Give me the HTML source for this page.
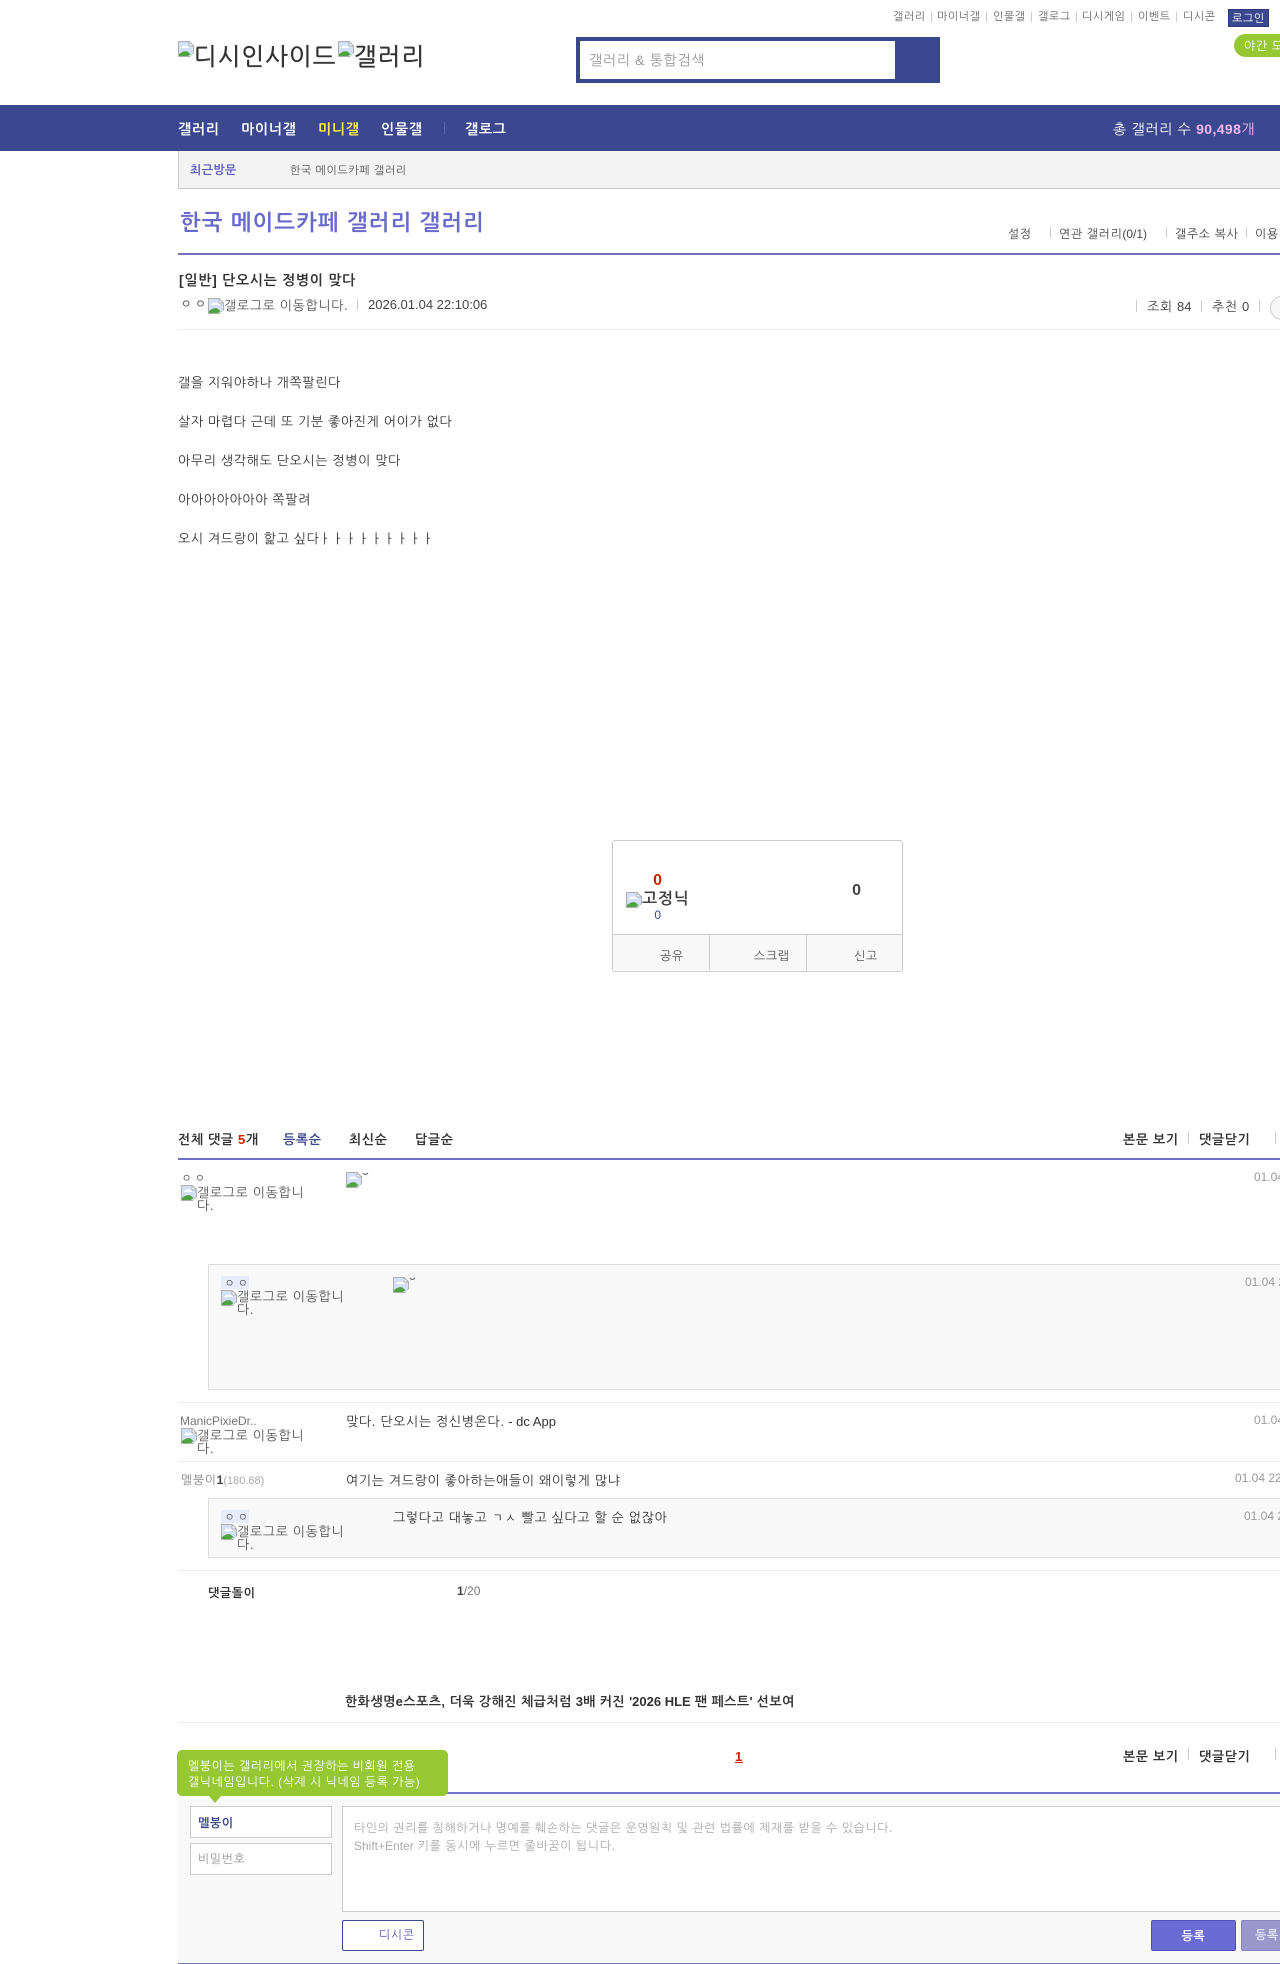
<!DOCTYPE html>
<html lang="ko"><head><meta charset="utf-8"><title>단오시는 정병이 맞다</title>
<style>
html,body{margin:0;padding:0;background:#fff}
body{position:relative;width:1280px;height:1964px;overflow:hidden;font-family:"Liberation Sans","NanumGothic",sans-serif;font-size:13px;color:#333}
.t{position:absolute;white-space:nowrap;line-height:16px;height:16px}
.t,.w,.r{letter-spacing:.05em}
.b{font-weight:bold}
.r{position:absolute}
.s{position:absolute;width:1px;background:#ccc}
.i{position:absolute;width:16px;height:16px}
.l{position:absolute;left:178px;right:0;height:1px;background:#eee}
.w{position:absolute;white-space:nowrap;font-size:13px;line-height:13px;color:#555}
.n{letter-spacing:0}
.j{letter-spacing:2px}
</style></head><body>
<svg width="0" height="0" style="position:absolute"><defs><symbol id="x" viewBox="0 0 16 16"><path d="M.5.5H11L15.500 5V12L12 15.500H.5Z" fill="#d3e0f8" stroke="#b0b0b0"/><path d="M11 .5V5H15.500Z" fill="#fff" stroke="#b0b0b0"/><path d="M3 7Q5 3.500 7 5Q10 3.500 12 7Z" fill="#fff"/><path d="M1 15V13Q6 9 9.500 10.500L12.500 13L10 15Z" fill="#4ea23f"/><path d="M12 15.500L15.500 12V15.500Z" fill="#fff"/></symbol></defs></svg>

<svg class="i" style="left:178px;top:41px"><use href="#x"/></svg>
<div class="t" style="left:194px;top:43px;font-size:24px;line-height:30px;height:30px;color:#333;-webkit-text-stroke:.5px #333">디시인사이드</div>
<svg class="i" style="left:338px;top:41px"><use href="#x"/></svg>
<div class="t" style="left:354px;top:43px;font-size:24px;line-height:30px;height:30px;color:#333;-webkit-text-stroke:.5px #333">갤러리</div>

<div class="r" style="left:576px;top:37px;width:364px;height:46px;background:#3b4890"></div>
<div class="r" style="left:580px;top:41px;width:315px;height:38px;background:#fff"></div>
<div class="t" style="left:589px;top:52px;font-size:14px;color:#999">갤러리 &amp; 통합검색</div>

<div class="t" style="left:893px;top:9px;font-size:11px;color:#666">갤러리</div><div class="s" style="left:931px;top:12px;height:10px"></div>
<div class="t" style="left:937px;top:9px;font-size:11px;color:#666">마이너갤</div><div class="s" style="left:986px;top:12px;height:10px"></div>
<div class="t" style="left:993px;top:9px;font-size:11px;color:#666">인물갤</div><div class="s" style="left:1031px;top:12px;height:10px"></div>
<div class="t" style="left:1038px;top:9px;font-size:11px;color:#666">갤로그</div><div class="s" style="left:1076px;top:12px;height:10px"></div>
<div class="t" style="left:1082px;top:9px;font-size:11px;color:#666">디시게임</div><div class="s" style="left:1131px;top:12px;height:10px"></div>
<div class="t" style="left:1138px;top:9px;font-size:11px;color:#666">이벤트</div><div class="s" style="left:1176px;top:12px;height:10px"></div>
<div class="t" style="left:1183px;top:9px;font-size:11px;color:#666">디시콘</div>
<div class="r" style="left:1228px;top:9px;width:39px;height:16px;background:#3b4890;border:1px solid #2e3a7c;color:#fff;font-size:11px;line-height:18px;text-align:center">로그인</div>
<div class="r" style="left:1234px;top:34px;width:80px;height:23px;border-radius:12px 0 0 12px;background:#95c832"></div>
<div class="t" style="left:1244px;top:38px;font-size:12px;color:#fff">야간 모드</div>

<div class="r" style="left:0;top:105px;width:1280px;height:46px;background:#3b4890"></div>
<div class="t b" style="left:178px;top:121px;font-size:14px;color:#fff">갤러리</div>
<div class="t b" style="left:241px;top:121px;font-size:14px;color:#fff">마이너갤</div>
<div class="t b" style="left:318px;top:121px;font-size:14px;color:#fff04a">미니갤</div>
<div class="t b" style="left:381px;top:121px;font-size:14px;color:#fff">인물갤</div>
<div class="s" style="left:444px;top:122px;height:12px;background:#5f6aa8"></div>
<div class="t b" style="left:465px;top:121px;font-size:14px;color:#fff">갤로그</div>
<div class="t" style="left:1113px;top:121px;font-size:14px;color:#fff">총 갤러리 수 <b style="color:#f6b6ee;letter-spacing:.4px">90,498</b><span style="color:#f6b6ee">개</span></div>

<div class="r" style="left:178px;top:151px;right:0;height:37px;background:#f3f3f3;border-left:1px solid #ccc;border-bottom:1px solid #ccc"></div>
<div class="t b" style="left:190px;top:162px;font-size:12px;letter-spacing:.4px;color:#5b5bc2">최근방문</div>
<div class="t" style="left:290px;top:163px;font-size:11px;letter-spacing:.6px;color:#555">한국 메이드카페 갤러리</div>

<div class="t" style="left:180px;top:208px;font-size:22px;line-height:30px;height:30px;color:#6a6acb;font-weight:bold">한국 메이드카페 갤러리 갤러리</div>
<div class="t" style="left:1008px;top:226px;font-size:12px;color:#444">설정</div><div class="s" style="left:1050px;top:227px;height:11px"></div>
<div class="t" style="left:1059px;top:226px;font-size:12px;color:#444">연관 갤러리<span class="n">(0/1)</span></div><div class="s" style="left:1166px;top:227px;height:11px"></div>
<div class="t" style="left:1175px;top:226px;font-size:12px;color:#444">갤주소 복사</div><div class="s" style="left:1246px;top:227px;height:11px"></div>
<div class="t" style="left:1255px;top:226px;font-size:12px;color:#444">이용 안내</div>
<div class="r" style="left:178px;top:253px;right:0;height:2px;background:#7571bb"></div>

<div class="t b" style="left:179px;top:272px;font-size:14px;color:#333">[일반] 단오시는 정병이 맞다</div>
<div class="t" style="left:180px;top:296px;font-size:13px;color:#555;letter-spacing:2.2px">ㅇㅇ</div>
<svg class="i" style="left:208px;top:298px"><use href="#x"/></svg>
<div class="t" style="left:224px;top:298px;font-size:13px;color:#555">갤로그로 이동합니다.</div>
<div class="s" style="left:357px;top:299px;height:11px"></div>
<div class="t n" style="left:368px;top:297px;font-size:13px;color:#444">2026.01.04 22:10:06</div>
<div class="s" style="left:1136px;top:300px;height:12px"></div>
<div class="t" style="left:1147px;top:299px;font-size:13px;color:#444">조회 <span class="n">84</span></div>
<div class="s" style="left:1201px;top:300px;height:12px"></div>
<div class="t" style="left:1212px;top:299px;font-size:13px;color:#444">추천 <span class="n">0</span></div>
<div class="s" style="left:1259px;top:300px;height:12px"></div>
<div class="r" style="left:1270px;top:296px;width:22px;height:22px;border-radius:50%;border:1px solid #ccc;background:#f6f6f6"></div>
<div class="l" style="top:329px"></div>

<div class="t" style="left:178px;top:375px;color:#333">갤을 지워야하나 개쪽팔린다</div>
<div class="t" style="left:178px;top:414px;color:#333">살자 마렵다 근데 또 기분 좋아진게 어이가 없다</div>
<div class="t" style="left:178px;top:453px;color:#333">아무리 생각해도 단오시는 정병이 맞다</div>
<div class="t" style="left:178px;top:492px;color:#333">아아아아아아아 쪽팔려</div>
<div class="t" style="left:178px;top:531px;color:#333">오시 겨드랑이 핥고 싶다ㅏㅏㅏㅏㅏㅏㅏㅏㅏ</div>

<div class="r" style="left:612px;top:840px;width:289px;height:130px;border:1px solid #ccc;border-radius:3px;background:#fff"></div>
<div class="r" style="left:613px;top:934px;width:289px;height:36px;background:#f8f8f8;border-top:1px solid #ccc;box-sizing:border-box;border-radius:0 0 3px 3px"></div>
<div class="s" style="left:709px;top:934px;height:36px"></div>
<div class="s" style="left:806px;top:934px;height:36px"></div>
<div class="t b" style="left:648px;top:873px;width:20px;text-align:center;font-size:16px;color:#cc2200">0</div>
<svg class="i" style="left:626px;top:892px"><use href="#x"/></svg>
<div class="t" style="left:642px;top:892px;font-size:16px;color:#444;font-weight:bold">고정닉</div>
<div class="t" style="left:648px;top:907px;width:20px;text-align:center;font-size:12px;color:#3b4890">0</div>
<div class="t b" style="left:847px;top:883px;width:20px;text-align:center;font-size:16px;color:#444">0</div>
<div class="t" style="left:660px;top:948px;font-size:12px;color:#555">공유</div>
<div class="t" style="left:754px;top:948px;font-size:12px;color:#555">스크랩</div>
<div class="t" style="left:854px;top:948px;font-size:12px;color:#555">신고</div>

<div class="t b" style="left:178px;top:1132px">전체 댓글 <span style="color:#cc2200">5</span>개</div>
<div class="t b" style="left:283px;top:1132px;color:#3b4890">등록순</div>
<div class="t b" style="left:349px;top:1132px">최신순</div>
<div class="t b" style="left:415px;top:1132px">답글순</div>
<div class="t b" style="left:1123px;top:1132px">본문 보기</div><div class="s" style="left:1188px;top:1132px;height:12px"></div>
<div class="t b" style="left:1199px;top:1132px">댓글닫기</div><div class="s" style="left:1275px;top:1132px;height:12px"></div>
<div class="r" style="left:178px;top:1158px;right:0;height:2px;background:#7070c6"></div>

<div class="t j" style="left:181px;top:1170px;font-size:12px;color:#666">ㅇㅇ</div>
<svg class="i" style="left:181px;top:1185px"><use href="#x"/></svg>
<div class="w" style="left:197px;top:1186px">갤로그로 이동합니<br>다.</div>
<svg class="i" style="left:346px;top:1172px"><use href="#x"/></svg>
<svg class="r" style="left:362px;top:1172px;width:7px;height:5px"><path d="M1 1Q3 4 6 1" fill="none" stroke="#555"/></svg>
<div class="t n" style="left:1254px;top:1169px;font-size:12px;color:#999">01.04 22:20:35</div>

<div class="r" style="left:208px;top:1264px;right:-10px;height:124px;background:#f9f9f9;border:1px solid #ddd"></div>
<div class="r" style="left:221px;top:1276px;width:28px;height:13px;background:#e6ecfb"></div>
<div class="t j" style="left:224px;top:1275px;font-size:12px;color:#666">ㅇㅇ</div>
<svg class="i" style="left:221px;top:1290px"><use href="#x"/></svg>
<div class="w" style="left:237px;top:1290px">갤로그로 이동합니<br>다.</div>
<svg class="i" style="left:393px;top:1277px"><use href="#x"/></svg>
<svg class="r" style="left:409px;top:1277px;width:7px;height:5px"><path d="M1 1Q3 4 6 1" fill="none" stroke="#555"/></svg>
<div class="t n" style="left:1245px;top:1274px;font-size:12px;color:#999">01.04 22:31:02</div>
<div class="l" style="top:1402px"></div>

<div class="t n" style="left:180px;top:1413px;font-size:12px;color:#777">ManicPixieDr..</div>
<svg class="i" style="left:181px;top:1428px"><use href="#x"/></svg>
<div class="w" style="left:197px;top:1429px">갤로그로 이동합니<br>다.</div>
<div class="t" style="left:346px;top:1414px;color:#333">맞다. 단오시는 정신병온다.<span class="n"> - dc App</span></div>
<div class="t n" style="left:1254px;top:1412px;font-size:12px;color:#999">01.04 22:35:14</div>
<div class="l" style="top:1461px"></div>

<div class="t" style="left:181px;top:1472px;font-size:12px;color:#888">멜붕이<b class="n" style="color:#444">1</b><span class="n" style="color:#aaa;font-size:11px">(180.68)</span></div>
<div class="t" style="left:346px;top:1473px;color:#333">여기는 겨드랑이 좋아하는애들이 왜이렇게 많냐</div>
<div class="t n" style="left:1235px;top:1470px;font-size:12px;color:#999">01.04 22:40:51</div>
<div class="r" style="left:208px;top:1498px;right:-10px;height:58px;background:#f9f9f9;border:1px solid #ddd"></div>
<div class="r" style="left:221px;top:1510px;width:28px;height:13px;background:#e6ecfb"></div>
<div class="t j" style="left:224px;top:1509px;font-size:12px;color:#666">ㅇㅇ</div>
<svg class="i" style="left:221px;top:1524px"><use href="#x"/></svg>
<div class="w" style="left:237px;top:1525px">갤로그로 이동합니<br>다.</div>
<div class="t" style="left:393px;top:1510px;color:#333">그렇다고 대놓고 ㄱㅅ 빨고 싶다고 할 순 없잖아</div>
<div class="t n" style="left:1244px;top:1508px;font-size:12px;color:#999">01.04 22:42:09</div>
<div class="l" style="top:1570px"></div>

<div class="t b" style="left:208px;top:1585px;font-size:12px;color:#333">댓글돌이</div>
<div class="t n" style="left:457px;top:1583px;font-size:12px;color:#777"><b style="color:#444">1</b>/20</div>

<div class="t b" style="left:345px;top:1694px;color:#333;letter-spacing:.45px">한화생명e스포츠, 더욱 강해진 체급처럼 <span class="n">3</span>배 커진 <span class="n">'2026 HLE</span> 팬 페스트<span class="n">'</span> 선보여</div>
<div class="l" style="top:1722px"></div>
<div class="t b" style="left:735px;top:1749px;color:#cc2200;text-decoration:underline">1</div>
<div class="t b" style="left:1123px;top:1749px">본문 보기</div><div class="s" style="left:1188px;top:1748px;height:12px"></div>
<div class="t b" style="left:1199px;top:1749px">댓글닫기</div><div class="s" style="left:1275px;top:1748px;height:12px"></div>

<div class="r" style="left:178px;top:1794px;right:0;height:169px;background:#f9f9f9"></div>
<div class="r" style="left:178px;top:1792px;right:0;height:2px;background:#7070c6"></div>
<div class="r" style="left:178px;top:1963px;right:0;height:1px;background:#7571bb"></div>
<div class="r" style="left:177px;top:1750px;width:271px;height:46px;border-radius:5px;background:#95c832"></div>
<div class="r" style="left:209px;top:1796px;width:0;height:0;border-left:6px solid transparent;border-right:6px solid transparent;border-top:7px solid #95c832"></div>
<div class="t" style="left:188px;top:1758px;font-size:12px;color:#fff;letter-spacing:.5px">멜붕이는 갤러리에서 권장하는 비회원 전용</div>
<div class="t" style="left:188px;top:1774px;font-size:12px;color:#fff;letter-spacing:.5px">갤닉네임입니다. (삭제 시 닉네임 등록 가능)</div>

<div class="r" style="left:190px;top:1806px;width:140px;height:30px;background:#fff;border:1px solid #ccc"></div>
<div class="t b" style="left:198px;top:1815px;font-size:12px;color:#3b4890">멜붕이</div>
<div class="r" style="left:190px;top:1843px;width:140px;height:30px;background:#fff;border:1px solid #ccc"></div>
<div class="t" style="left:198px;top:1851px;font-size:12px;color:#999">비밀번호</div>
<div class="r" style="left:342px;top:1806px;width:950px;height:104px;background:#fff;border:1px solid #ccc"></div>
<div class="t" style="left:354px;top:1820px;font-size:12px;color:#aaa;letter-spacing:.54px">타인의 권리를 침해하거나 명예를 훼손하는 댓글은 운영원칙 및 관련 법률에 제재를 받을 수 있습니다.</div>
<div class="t" style="left:354px;top:1838px;font-size:12px;color:#aaa"><span class="n">Shift+Enter</span> 키를 동시에 누르면 줄바꿈이 됩니다.</div>
<div class="r" style="left:342px;top:1920px;width:80px;height:29px;background:#fff;border:1px solid #3b4890;border-radius:2px"></div>
<div class="t" style="left:379px;top:1927px;font-size:12px;color:#5a5ac0">디시콘</div>
<div class="r" style="left:1151px;top:1920px;width:83px;height:29px;background:#6b6bd6;border:1px solid #5050b4;border-radius:2px;color:#fff;font-size:12px;font-weight:bold;line-height:30px;text-align:center">등록</div>
<div class="r" style="left:1241px;top:1920px;width:83px;height:29px;background:#9898cc;border:1px solid #8585bd;border-radius:2px"></div>
<div class="t" style="left:1255px;top:1927px;font-size:12px;font-weight:bold;color:#e4e4f2">등록</div>
</body></html>
